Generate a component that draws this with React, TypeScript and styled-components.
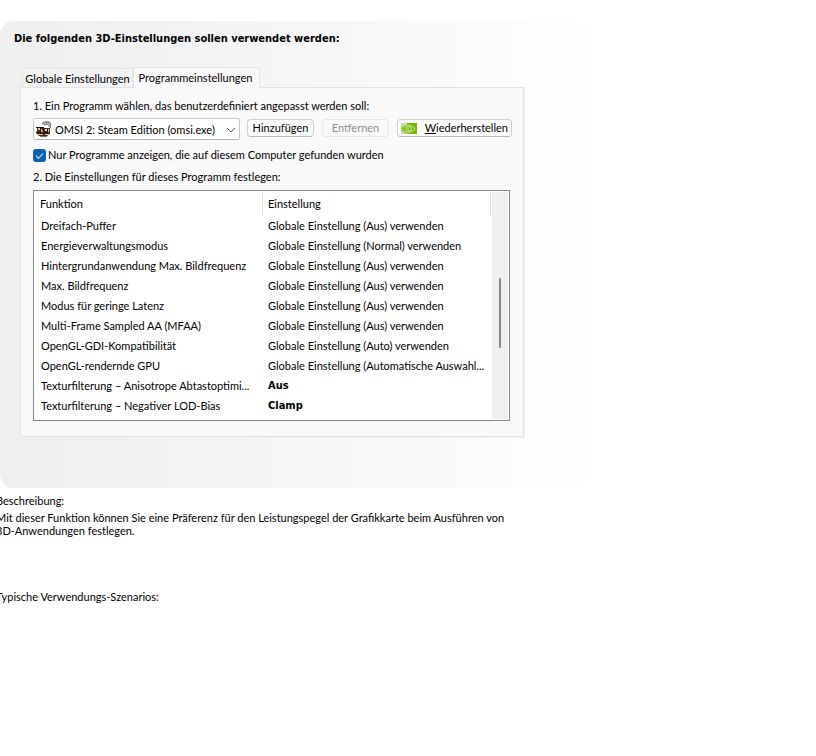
import React from "react";
import styled, { createGlobalStyle } from "styled-components";

const GlobalStyle = createGlobalStyle`
  * { box-sizing: border-box; }
  body {
    margin: 0;
    background: #fff;
    color: #000;
    font-family: Tahoma, Lato, sans-serif;
    font-size: 11px;
    line-height: 14px;
    overflow-x: hidden;
  }
`;

const Page = styled.main`
  padding-top: 21px;
  overflow: hidden;
`;

const Card = styled.section`
  width: 100%;
  max-width: 588px;
  padding: 11px 64px 51px 14px;
  border-radius: 14px;
  background: linear-gradient(to right, #efefef 0, #f1f1f1 20%, #fefefe 98%);
`;

const Title = styled.h1`
  margin: 0 0 21px;
  font-family: Tahoma, "DejaVu Sans Condensed", sans-serif;
  font-size: 11px;
  line-height: 14px;
  font-weight: bold;
  white-space: nowrap;
`;

const Tabs = styled.div`
  display: flex;
  align-items: flex-end;
  padding-left: 8px;
`;

const Tab = styled.button<{ $active?: boolean }>`
  height: ${(p) => (p.$active ? 21 : 19)}px;
  margin: 0 0 ${(p) => (p.$active ? "-1px" : "0")};
  padding: ${(p) => (p.$active ? "0 2px 0 0" : "2px 0 0")};
  width: ${(p) => (p.$active ? 127 : 111)}px;
  border: 1px solid #e5e5e5;
  border-bottom: 0;
  background: ${(p) => (p.$active ? "#f9f9f9" : "#f3f3f3")};
  color: inherit;
  font: inherit;
  white-space: nowrap;
  z-index: ${(p) => (p.$active ? 1 : 0)};
`;

const Panel = styled.div`
  margin-left: 6px;
  padding: 11px 11px 15px 12px;
  border: 1px solid #e2e2e2;
  box-shadow: 1px 1px 0 #f0f0f0;
  background: #f9f9f9;
`;

const Label = styled.label`
  display: block;
  white-space: nowrap;
`;

const Controls = styled.div`
  display: flex;
  margin-top: 5px;
  align-items: flex-start;
`;

const SelectWrap = styled.div`
  position: relative;
  flex: 0 0 207px;
  margin-right: 7px;

  svg { position: absolute; pointer-events: none; }
`;

const Select = styled.select`
  display: block;
  appearance: none;
  width: 100%;
  height: 22px;
  padding: 2px 20px 0 21px;
  border: 1px solid #c8c8c8;
  border-bottom-color: #b4b4b4;
  border-radius: 2px;
  background: #fff;
  color: inherit;
  font: inherit;
`;

const AppIcon = styled.svg`
  left: 3px;
  top: 3px;
`;

const Chevron = styled.svg`
  right: 4px;
  top: 8px;
`;

const Button = styled.button<{ $width: number; $gap?: number }>`
  display: flex;
  align-items: center;
  justify-content: center;
  flex: 0 0 auto;
  width: ${(p) => p.$width}px;
  height: 18px;
  margin: 1px ${(p) => p.$gap || 0}px 0 0;
  padding: 0 3px;
  border: 1px solid #cfcfcf;
  border-bottom-color: #b8b8b8;
  border-radius: 4px;
  background: #fdfdfd;
  color: inherit;
  font: inherit;
  white-space: nowrap;

  &:disabled {
    border-color: #e5e5e5;
    background: #f8f8f8;
    color: #909090;
  }

  svg { margin-right: auto; }
`;

const CheckRow = styled.label`
  display: flex;
  align-items: center;
  gap: 2px;
  margin: 8px 0;
  white-space: nowrap;
`;

const Check = styled.input`
  appearance: none;
  width: 13px;
  height: 13px;
  margin: 0;
  border-radius: 3px;
  background: #0f5fb4;
  display: grid;
  place-items: center;

  &:checked::before {
    content: "";
    width: 6px;
    height: 3px;
    margin-top: -1px;
    border: solid #d4e6f7;
    border-width: 0 0 1px 1px;
    transform: rotate(-45deg);
  }
`;

const ListBox = styled.div`
  display: flex;
  margin: 6px 2px 0 0;
  padding: 1px 1px 1px 0;
  border: 1px solid #828790;
  background: #fff;
`;

const TableArea = styled.div`
  flex: 1;
  min-width: 0;
  padding-bottom: 3px;
`;

const Table = styled.table`
  width: 100%;
  table-layout: fixed;
  border-collapse: separate;
  border-spacing: 0;

  th, td {
    padding: 0 0 0 5px;
    text-align: left;
    white-space: nowrap;
  }
  th {
    height: 24px;
    font-weight: normal;
    border-right: 1px solid #e5e5e5;
  }
  td { height: 20px; }
  th:first-child { padding-left: 6px; width: 229px; }
  td:first-child { padding-left: 7px; }
`;

const Value = styled.td<{ $strong?: boolean }>`
  ${(p) => p.$strong && 'font-family: Tahoma, "DejaVu Sans Condensed", sans-serif; font-weight: bold;'}
`;

const ScrollTrack = styled.div`
  flex: 0 0 16px;
  margin-left: 1px;
  padding-top: 86px;
  background: #f0f0f0;
`;

const ScrollThumb = styled.div`
  width: 2px;
  height: 70px;
  margin-left: 7px;
  border-radius: 1px;
  background: #858585;
`;

const Notes = styled.section`
  margin: 6px 0 0 -4px;
  max-width: 520px;
`;

const Heading = styled.h2`
  margin: 0;
  font: inherit;
`;

const Description = styled.p`
  margin: 3px 0 53px;
  line-height: 13px;
`;

const rows: [string, string, boolean?][] = [
  ["Dreifach-Puffer", "Globale Einstellung (Aus) verwenden"],
  ["Energieverwaltungsmodus", "Globale Einstellung (Normal) verwenden"],
  ["Hintergrundanwendung Max. Bildfrequenz", "Globale Einstellung (Aus) verwenden"],
  ["Max. Bildfrequenz", "Globale Einstellung (Aus) verwenden"],
  ["Modus für geringe Latenz", "Globale Einstellung (Aus) verwenden"],
  ["Multi-Frame Sampled AA (MFAA)", "Globale Einstellung (Aus) verwenden"],
  ["OpenGL-GDI-Kompatibilität", "Globale Einstellung (Auto) verwenden"],
  ["OpenGL-rendernde GPU", "Globale Einstellung (Automatische Auswahl..."],
  ["Texturfilterung – Anisotrope Abtastoptimi...", "Aus", true],
  ["Texturfilterung – Negativer LOD-Bias", "Clamp", true],
];

export default function App() {
  return (
    <>
      <GlobalStyle />
      <Page>
        <Card>
          <Title>Die folgenden 3D-Einstellungen sollen verwendet werden:</Title>
          <Tabs role="tablist">
            <Tab role="tab" aria-selected={false}>Globale Einstellungen</Tab>
            <Tab role="tab" aria-selected $active>Programmeinstellungen</Tab>
          </Tabs>
          <Panel role="tabpanel">
            <Label htmlFor="program">1. Ein Programm wählen, das benutzerdefiniert angepasst werden soll:</Label>
            <Controls>
              <SelectWrap>
                <Select id="program">
                  <option>OMSI 2: Steam Edition (omsi.exe)</option>
                </Select>
                <AppIcon width="16" height="16" viewBox="0 0 16 16" aria-hidden="true">
                  <path d="M6 2 9 0h4l2 2v4l-2 1V5l-2-2-4 1z" fill="#b4b8ba" />
                  <path d="M6 2.500 9 1h4l2 3-1 3M8 4l3-1 2 2" stroke="#70777a" fill="none" />
                  <path d="M1 7h13v6l-3 2H3l-3-3 1-2z" fill="#4a2b17" />
                  <path d="M2 7h2v2H2zM5 8h1v2H5zM9 8h2v2H9zM12 8h1v3h-1z" fill="#e3c7a0" />
                  <path d="M0 6.500h8M0 11.500h4M7 11.500h5" stroke="#191310" />
                  <path d="M7.500 7v6M11.500 8v5M4.500 7v6" stroke="#111" />
                  <path d="M2 13.500h5M9 13.500h4M5 10.500h2" stroke="#d8bd90" />
                  <path d="M4 15.500h7" stroke="#777" />
                </AppIcon>
                <Chevron width="10" height="8" viewBox="0 0 10 8" aria-hidden="true">
                  <path d="M1 2l4 4 4-4" fill="none" stroke="#555" />
                </Chevron>
              </SelectWrap>
              <Button $width={67} $gap={8}>Hinzufügen</Button>
              <Button $width={67} $gap={8} disabled>Entfernen</Button>
              <Button $width={115}>
                <svg width="16" height="11" viewBox="0 0 16 11" aria-hidden="true">
                  <path d="M0 0h16v11H0z" fill="#76b900" />
                  <path d="M0 0h6v2C3 2 1 4 0 5zM0 6c1 2 3 4 6 4v1H0z" fill="#c9dfa2" />
                  <path d="M1 5.500C3 2.500 6 1.500 9 2.500s4 2 5 3c-2 3-5 4-8 3.500S2 7 1 5.500z" fill="#76b900" stroke="#e6f3cd" strokeWidth="0.8" />
                  <path d="M3.500 5.500C5 3.500 7 3 9 4s2 2 1 3-3 1-4.500-.3S6 4.500 8 5.500" fill="none" stroke="#e6f3cd" strokeWidth="0.8" />
                </svg>
                <span><u>W</u>iederherstellen</span>
              </Button>
            </Controls>
            <CheckRow>
              <Check type="checkbox" defaultChecked />
              Nur Programme anzeigen, die auf diesem Computer gefunden wurden
            </CheckRow>
            <Label as="div" id="settings-label">2. Die Einstellungen für dieses Programm festlegen:</Label>
            <ListBox>
              <TableArea>
                <Table aria-labelledby="settings-label">
                  <thead>
                    <tr><th>Funktion</th><th>Einstellung</th></tr>
                  </thead>
                  <tbody>
                    {rows.map(([name, value, strong]) => (
                      <tr key={name}>
                        <td>{name}</td>
                        <Value $strong={strong}>{value}</Value>
                      </tr>
                    ))}
                  </tbody>
                </Table>
              </TableArea>
              <ScrollTrack><ScrollThumb /></ScrollTrack>
            </ListBox>
          </Panel>
        </Card>
        <Notes>
          <Heading>Beschreibung:</Heading>
          <Description>
            Mit dieser Funktion können Sie eine Präferenz für den Leistungspegel der Grafikkarte beim Ausführen von
            3D-Anwendungen festlegen.
          </Description>
          <Heading>Typische Verwendungs-Szenarios:</Heading>
        </Notes>
      </Page>
    </>
  );
}
